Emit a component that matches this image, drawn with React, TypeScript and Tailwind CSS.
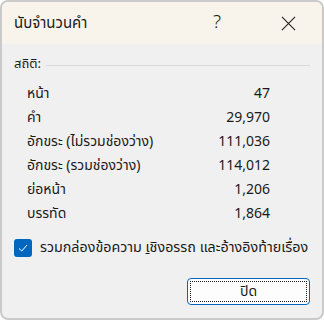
import React from 'react';

const stats = [
  { label: 'หน้า', value: '47' },
  { label: 'คำ', value: '29,970' },
  { label: 'อักขระ (ไม่รวมช่องว่าง)', value: '111,036' },
  { label: 'อักขระ (รวมช่องว่าง)', value: '114,012' },
  { label: 'ย่อหน้า', value: '1,206' },
  { label: 'บรรทัด', value: '1,864' },
];

const font = { fontFamily: '"Noto Sans Thai", "Leelawadee UI", "Noto Sans", "Open Sans", sans-serif' };

export default function App() {
  return (
    <div className="w-[324px] h-[321px] bg-white" style={font}>
      <div className="w-[324px] h-[320px] border-2 border-[#cacaca] rounded-[8px] overflow-hidden bg-[#f0f0f0] flex flex-col">
        {/* title bar */}
        <div className="h-[42px] bg-[#f9f4eb] flex items-center shrink-0">
          <span className="pl-[12px] pt-[2px] text-[15px] text-[#1a1a1a] flex-1">นับจำนวนคำ</span>
          <span className="w-[46px] text-center text-[19px] font-light text-[#1a1a1a] mr-[25px]">?</span>
          <span className="w-[46px] flex justify-center mr-[11px]">
            <svg width="15" height="15" viewBox="0 0 16 16" stroke="#1a1a1a" strokeWidth="1.1" fill="none">
              <path d="M1 1 L15 15 M15 1 L1 15" />
            </svg>
          </span>
        </div>

        <div className="flex flex-col px-[12px] pt-[10px]">
          <div className="flex items-center gap-[5px] h-[22px]">
            <span className="text-[13px] text-[#1a1a1a]">สถิติ:</span>
            <div className="flex-1 h-px bg-[#d9d9d9]" />
          </div>

          <div className="flex flex-col pl-[13px] mt-[5px]">
            {stats.map((s) => (
              <div key={s.label} className="flex items-center h-[24px] text-[14px] text-[#1a1a1a]">
                <span className="flex-1">{s.label}</span>
                <span className="w-[90px] text-right mr-[40px]">{s.value}</span>
              </div>
            ))}
          </div>

          <div className="flex items-center gap-[8px] mt-[12px]">
            <div className="w-[18px] h-[18px] rounded-[3px] bg-[#0067c0] flex items-center justify-center">
              <svg width="12" height="12" viewBox="0 0 12 12" fill="none" stroke="white" strokeWidth="1">
                <path d="M2 6.5 L4.8 9 L10 3" />
              </svg>
            </div>
            <span className="text-[14.3px] text-[#1a1a1a]">
              รวมกล่องข้อความ <span className="underline">เ</span>ชิงอรรถ และอ้างอิงท้ายเรื่อง
            </span>
          </div>

          <div className="flex justify-end mt-[20px]">
            <button className="w-[123px] h-[27px] rounded-[4px] border border-[#0067c0] bg-[#fdfdfd] p-[2px]">
              <div className="w-full h-full border border-dotted border-[#1a1a1a] flex items-center justify-center text-[14px] text-[#1a1a1a]">
                ปิด
              </div>
            </button>
          </div>
        </div>
      </div>
    </div>
  );
}
